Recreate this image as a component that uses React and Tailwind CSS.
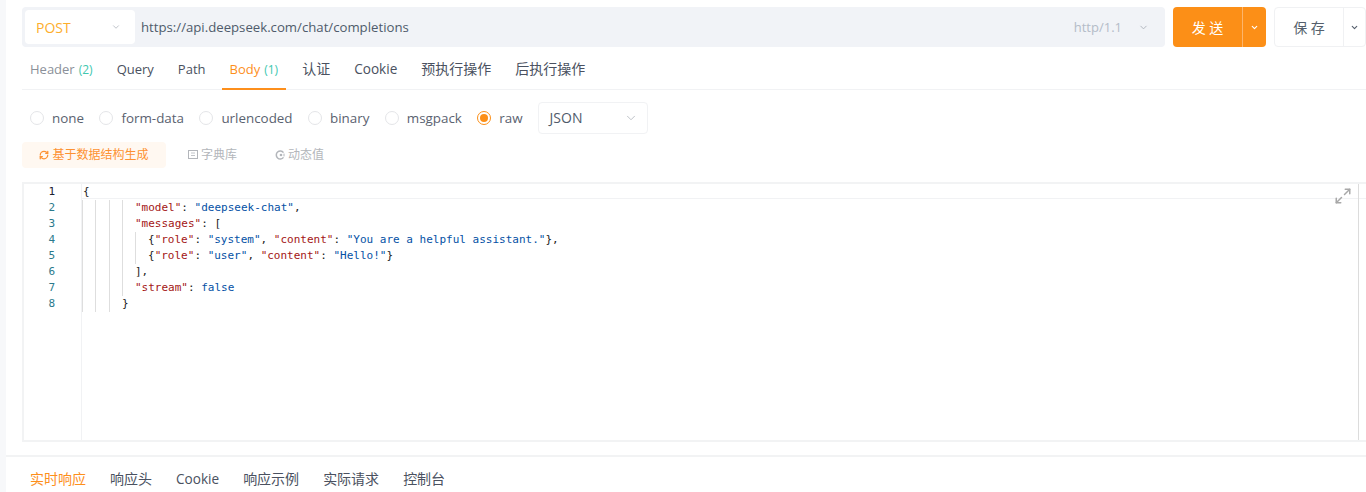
import { ChevronDown, RefreshCw, Maximize2 } from 'lucide-react'

const reqTabs = [
  { label: 'Header', count: '(2)', muted: true },
  { label: 'Query' },
  { label: 'Path' },
  { label: 'Body', count: '(1)', active: true },
  { label: '认证', cjk: true },
  { label: 'Cookie' },
  { label: '预执行操作', cjk: true },
  { label: '后执行操作', cjk: true },
]

const bodyTypes = ['none', 'form-data', 'urlencoded', 'binary', 'msgpack']
const resTabs = ['响应头', 'Cookie', '响应示例', '实际请求', '控制台']

const K = ({ children }) => <span className="text-[#a31515]">{children}</span>
const S = ({ children }) => <span className="text-[#0451a5]">{children}</span>

// indent guides are drawn per line, x offsets from the code column
function Guides({ count }) {
  return (
    <span className="absolute left-0 top-0 h-full flex">
      {Array.from({ length: count }).map((_, i) => (
        <span key={i} className="w-[13.3px] h-full border-l border-[#dedede]" />
      ))}
    </span>
  )
}

const lines = [
  { guides: 0, pad: 0, code: <>{'{'}</> },
  { guides: 4, pad: 53, code: <><K>"model"</K>: <S>"deepseek-chat"</S>,</> },
  { guides: 4, pad: 53, code: <><K>"messages"</K>: [</> },
  { guides: 5, pad: 66, code: <>{'{'}<K>"role"</K>: <S>"system"</S>, <K>"content"</K>: <S>"You are a helpful assistant."</S>{'}'},</> },
  { guides: 5, pad: 66, code: <>{'{'}<K>"role"</K>: <S>"user"</S>, <K>"content"</K>: <S>"Hello!"</S>{'}'}</> },
  { guides: 4, pad: 53, code: <>],</> },
  { guides: 4, pad: 53, code: <><K>"stream"</K>: <S>false</S></> },
  { guides: 3, pad: 40, code: <>{'}'}</> },
]

function DictIcon() {
  return (
    <svg width="10" height="10" viewBox="0 0 10 10" fill="none" stroke="currentColor" strokeWidth="1">
      <rect x="0.5" y="0.5" width="9" height="8" />
      <path d="M3 3h4M3 5.5h4" strokeWidth="0.8" />
    </svg>
  )
}

function DynamicIcon() {
  return (
    <svg width="10" height="10" viewBox="0 0 10 10" fill="none" stroke="currentColor" strokeWidth="1.5">
      <path d="M8.5 2.6A4 4 0 1 0 8.5 7.4" />
      <circle cx="6" cy="5" r="1.3" fill="currentColor" stroke="none" />
      <path d="M9 3.6v2.8" strokeWidth="1" />
    </svg>
  )
}

export default function App() {
  return (
    <div className="flex h-[492px] w-[1366px] overflow-hidden bg-[#f7f8fa] pl-[6px] font-['Open_Sans','Noto_Sans_CJK_SC',sans-serif] text-[13px] text-[#4a5568]">
      <div className="flex-1 min-w-0 bg-white flex flex-col">
        {/* url bar */}
        <div className="flex items-stretch h-[40px] mt-[7px] ml-[16px]">
          <div className="w-[1143px] shrink-0 bg-[#f1f3f7] rounded-[4px] flex items-center pl-[3px] pr-[16px]">
            <div className="w-[110px] h-[34px] bg-white rounded-[4px] flex items-center justify-between pl-[11px] pr-[14px]">
              <span className="text-[#fdae2d] font-medium text-[14px]">POST</span>
              <ChevronDown className="w-[10px] h-[10px] text-[#b5b9c0]" />
            </div>
            <span className="ml-[6px] flex-1 text-[13.2px] text-[#4f5b6b] pt-px">https://api.deepseek.com/chat/completions</span>
            <span className="text-[#b4bcc8] text-[13px] pt-px">http/1.1</span>
            <ChevronDown className="ml-[16px] w-[11px] h-[11px] text-[#adb2ba]" />
          </div>
          <div className="ml-[8px] w-[93px] shrink-0 bg-[#fc8f17] rounded-[4px] flex text-white">
            <div className="w-[69px] flex items-center justify-center text-[14px] whitespace-pre">发 送</div>
            <div className="flex-1 border-l border-[#fdb56b] flex items-center justify-center">
              <ChevronDown className="w-[9px] h-[9px]" strokeWidth={3} />
            </div>
          </div>
          <div className="ml-[8px] w-[92px] shrink-0 border border-[#f0f1f3] rounded-[4px] flex bg-white">
            <div className="w-[68px] flex items-center justify-center text-[14px] whitespace-pre text-[#555f6c]">保 存</div>
            <div className="flex-1 border-l border-[#f0f1f3] flex items-center justify-center">
              <ChevronDown className="w-[9px] h-[9px] text-[#555f6c]" strokeWidth={3} />
            </div>
          </div>
        </div>

        {/* request tabs */}
        <div className="flex h-[43px] ml-[16px] border-b border-[#f1f2f4] text-[13px]">
          {reqTabs.map((t) => (
            <div
              key={t.label}
              className={`relative px-[8px] mr-[8px] flex items-center gap-[4px] ${t.cjk ? 'text-[14px] pt-[1px]' : 'pt-[3px]'} ${t.label === 'Cookie' ? 'text-[13.6px]' : ''} ${t.active ? 'text-[#fd8f1c] font-medium' : t.muted ? 'text-[#8b9099]' : 'text-[#4a5160]'}`}
            >
              <span>{t.label}</span>
              {t.count && <span className="text-[12px] text-[#41c7b0]">{t.count}</span>}
              {t.active && <span className="absolute left-0 right-0 -bottom-px h-[2px] bg-[#fd8f1c]" />}
            </div>
          ))}
        </div>

        {/* body type */}
        <div className="flex items-center h-[52px] pt-[4px] pl-[24px] text-[13.4px]">
          {bodyTypes.map((b) => (
            <label key={b} className="flex items-center mr-[15.4px]">
              <span className="w-[14px] h-[14px] rounded-full border border-[#e4e5e8] mr-[8px]" />
              <span className="text-[#5a6270] pt-px">{b}</span>
            </label>
          ))}
          <label className="flex items-center">
            <span className="w-[14px] h-[14px] rounded-full border border-[#fc8f17] mr-[8px] flex items-center justify-center">
              <span className="w-[8px] h-[8px] rounded-full bg-[#fc8f17]" />
            </span>
            <span className="text-[#5a6270] pt-px">raw</span>
          </label>
          <div className="ml-[15px] w-[110px] h-[32px] border border-[#f1f2f4] rounded-[4px] flex items-center justify-between pl-[11px] pr-[9px] text-[14px] text-[#4f5b6b]">
            <span className="-mt-px">JSON</span>
            <ChevronDown className="w-[14px] h-[14px] text-[#b5b9c0]" strokeWidth={1.5} />
          </div>
        </div>

        {/* generate actions */}
        <div className="flex items-center h-[26px] ml-[16px] text-[12px]">
          <div className="w-[144px] h-[26px] bg-[#fff8f1] rounded-[4px] flex items-center justify-center gap-[3px] text-[#fd9232]">
            <RefreshCw className="w-[10px] h-[10px]" strokeWidth={3} />
            <span>基于数据结构生成</span>
          </div>
          <div className="ml-[22px] flex items-center gap-[3px] text-[#b3b6bb]">
            <DictIcon />
            <span>字典库</span>
          </div>
          <div className="ml-[38px] flex items-center gap-[3px] text-[#b3b6bb]">
            <DynamicIcon />
            <span>动态值</span>
          </div>
        </div>

        {/* editor */}
        <div className="relative mt-[14px] ml-[16px] h-[260px] border-y-[2px] border-l-[2px] border-[#f2f3f4] flex font-['DejaVu_Sans_Mono',monospace] text-[11px] leading-[16px] text-[#222]">
          <div className="w-[58px] border-r border-[#f1f2f4] shrink-0">
            {lines.map((_, i) => (
              <div key={i} className={`h-[16px] text-right pr-[26px] ${i === 0 ? 'text-[#1a2030]' : 'text-[#2b7a8c]'}`}>{i + 1}</div>
            ))}
          </div>
          <div className="flex-1 min-w-0">
            {lines.map((l, i) => (
              <div key={i} className="relative h-[16px] whitespace-pre" style={{ paddingLeft: l.pad || 1 }}>
                <Guides count={l.guides} />
                {l.code}
                {i === 0 && <span className="absolute left-0 right-0 bottom-px h-px bg-[#f1f2f4]" />}
              </div>
            ))}
          </div>
          <Maximize2 className="absolute right-[14px] top-[3px] w-[18px] h-[18px] text-[#a8a8a8]" strokeWidth={2} />
          <span className="absolute right-[7px] top-0 bottom-0 w-px bg-[#dcdcdc]" />
        </div>

        {/* response tabs */}
        <div className="mt-[13px] flex-1 border-t-[2px] border-[#f2f3f4] flex items-center pl-[16px] pt-[8px] text-[14px] text-[#4a5160]">
          <span className="px-[8px] text-[#fd8f1c]">实时响应</span>
          {resTabs.map((t) => (
            <span key={t} className={`ml-[8px] px-[8px] ${t === 'Cookie' ? 'text-[13.6px] pt-px' : ''}`}>{t}</span>
          ))}
        </div>
      </div>
    </div>
  )
}
